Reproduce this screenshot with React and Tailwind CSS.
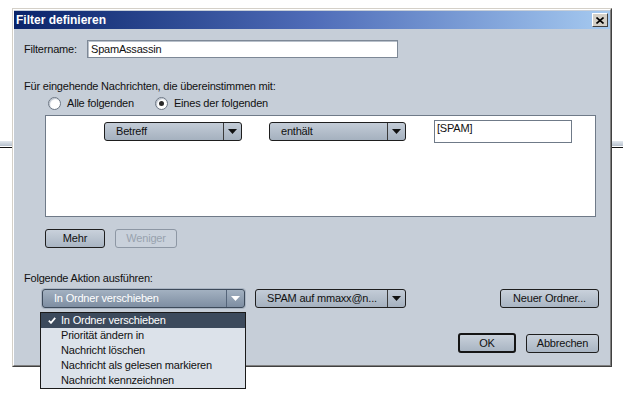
import React from "react";

const FONT = "font-['Liberation_Sans',Arial,sans-serif]";

function Arrow({ white }) {
  return (
    <svg width="9" height="5" viewBox="0 0 9 5">
      <path d="M0 0h9L4.5 5z" fill={white ? "#ffffff" : "#111111"} />
    </svg>
  );
}

function Dropdown({ text, width, focused }) {
  return (
    <div
      className={
        "flex h-[19px] items-stretch rounded-[3px] border " +
        (focused
          ? "border-[#3d4a5a] bg-gradient-to-b from-[#a3b1c1] to-[#7e8ea2] text-white shadow-[0_0_0_1px_#aab5c3]"
          : "border-[#1e1e1e] bg-gradient-to-b from-[#c3ccd7] to-[#a5b1bf] text-[#111]")
      }
      style={{ width }}
    >
      <div className="flex flex-1 items-center truncate pl-[11px] leading-none">{text}</div>
      <div
        className={
          "flex w-[18px] items-center justify-center border-l " +
          (focused ? "border-[#55657a]" : "border-[#3a3a3a]")
        }
      >
        <Arrow white={focused} />
      </div>
    </div>
  );
}

function Button({ children, width, disabled, isDefault }) {
  return (
    <div
      className={
        "flex items-center justify-center rounded-[3px] leading-none " +
        (disabled
          ? "h-[19px] border border-[#8d97a4] bg-[#c9d1db] text-[#98a2ae]"
          : isDefault
          ? "h-[20px] border-2 border-[#151515] bg-gradient-to-b from-[#c9d1db] to-[#a9b5c3] text-[#111]"
          : "h-[19px] border border-[#1e1e1e] bg-gradient-to-b from-[#c9d1db] to-[#a9b5c3] text-[#111]")
      }
      style={{ width }}
    >
      {children}
    </div>
  );
}

function Radio({ checked, label }) {
  return (
    <div className="flex items-center">
      <div className="flex h-[13px] w-[13px] items-center justify-center rounded-full border border-[#6b7684] bg-white shadow-[inset_1px_1px_1px_#b9c1cc]">
        {checked && <div className="h-[5px] w-[5px] rounded-full bg-[#2a2a2a]" />}
      </div>
      <span className="ml-[6px] leading-none">{label}</span>
    </div>
  );
}

export default function App() {
  const items = [
    "In Ordner verschieben",
    "Priorität ändern in",
    "Nachricht löschen",
    "Nachricht als gelesen markieren",
    "Nachricht kennzeichnen",
  ];
  return (
    <div className={"relative h-[394px] w-[623px] overflow-hidden bg-white text-[11px] tracking-[-0.2px] text-[#111] " + FONT}>
      {/* background window edge behind the dialog */}
      <div className="absolute left-0 top-[141px] h-[5px] w-full bg-gradient-to-b from-[#e3e8ee] to-[#b6c0cc]" />
      <div className="absolute left-0 top-[147px] h-px w-full bg-[#111]" />

      <div className="relative z-10 ml-[12px] mt-[8px] h-[359px] w-[600px] border border-b-[#404040] border-l-[#d4d0c8] border-r-[#404040] border-t-[#d4d0c8] bg-[#d4d0c8]">
        <div className="flex h-full flex-col border border-b-[#808080] border-l-white border-r-[#808080] border-t-white bg-[#c6ced8] pt-px">
          {/* title bar */}
          <div className="flex h-[18px] shrink-0 items-center justify-between bg-gradient-to-r from-[#0a246a] via-[#4f6cb8] to-[#a6caf0] pl-[2px] pr-[2px]">
            <span className="text-[12px] font-bold tracking-normal text-white">Filter definieren</span>
            <div className="flex h-[14px] w-[16px] items-center justify-center border border-b-[#404040] border-l-white border-r-[#404040] border-t-white bg-[#d4d0c8]">
              <svg width="8" height="7" viewBox="0 0 8 7">
                <path d="M0.5 0.5L7.5 6.5M7.5 0.5L0.5 6.5" stroke="#000" strokeWidth="1.6" />
              </svg>
            </div>
          </div>

          {/* body */}
          <div className="flex flex-col pl-[10px] pr-[11px]">
            <div className="mt-[11px] flex h-[18px] items-center">
              <span className="w-[63px]">Filtername:</span>
              <div className="flex h-[18px] w-[311px] items-center border border-[#7d8896] bg-white pl-[3px] shadow-[inset_1px_1px_0_#b8c0ca]">
                SpamAssassin
              </div>
            </div>

            <div className="mt-[21px] h-[14px] leading-[14px]">
              Für eingehende Nachrichten, die übereinstimmen mit:
            </div>

            <div className="ml-[24px] mt-[3px] flex h-[14px] items-center gap-[21px]">
              <Radio label="Alle folgenden" />
              <Radio checked label="Eines der folgenden" />
            </div>

            <div className="ml-[21px] mt-[5px] flex h-[102px] w-[551px] items-start border border-[#6f7a88] bg-white">
              <div className="ml-[58px] mt-[6px]">
                <Dropdown text="Betreff" width={138} />
              </div>
              <div className="ml-[27px] mt-[6px]">
                <Dropdown text="enthält" width={137} />
              </div>
              <div className="ml-[28px] mt-[4px] flex h-[23px] w-[138px] items-start border border-[#6f7a88] bg-white pl-[2px] pt-[2px] leading-none">
                [SPAM]
              </div>
            </div>

            <div className="ml-[21px] mt-[12px] flex gap-[10px]">
              <Button width={60}>Mehr</Button>
              <Button width={62} disabled>Weniger</Button>
            </div>

            <div className="mt-[23px] h-[14px] leading-[14px]">Folgende Aktion ausführen:</div>

            <div className="mt-[4px] flex items-center">
              <div className="relative ml-[18px]">
                <Dropdown text="In Ordner verschieben" width={203} focused />
                <div className="absolute left-[-2px] top-[23px] z-20 w-[206px] border border-[#1a1a1a] bg-[#dce2ea]">
                  {items.map((t, i) => (
                    <div
                      key={t}
                      className={
                        "relative flex h-[15px] items-center pl-[20px] leading-none " +
                        (i === 0 ? "bg-[#3c4a5c] text-white" : "text-[#111]")
                      }
                    >
                      {i === 0 && (
                        <svg className="absolute left-[7px] top-[4px]" width="8" height="7" viewBox="0 0 8 7">
                          <path d="M0.8 3.6L3 5.8L7.2 0.8" stroke="#fff" strokeWidth="1.8" fill="none" />
                        </svg>
                      )}
                      {t}
                    </div>
                  ))}
                </div>
              </div>
              <div className="ml-[10px]">
                <Dropdown text="SPAM auf mmaxx@n..." width={151} />
              </div>
              <div className="ml-auto">
                <Button width={99}>Neuer Ordner...</Button>
              </div>
            </div>

            <div className="mt-[25px] flex items-center justify-end gap-[10px]">
              <Button width={58} isDefault>OK</Button>
              <Button width={73}>Abbrechen</Button>
            </div>
          </div>
        </div>
      </div>
    </div>
  );
}
